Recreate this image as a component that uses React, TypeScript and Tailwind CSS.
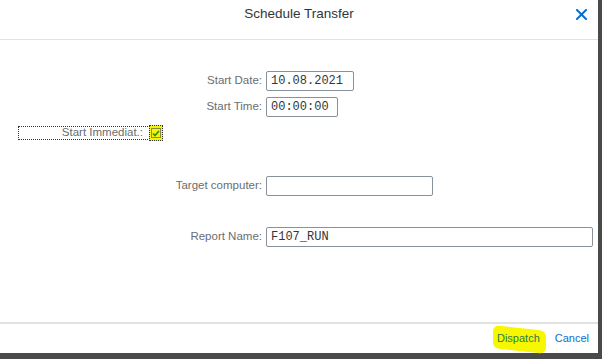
import React from "react";

const labelCls =
  "w-[266px] shrink-0 pr-[4px] text-right text-[11.5px] text-[#6a6d70] leading-none";
const inputCls =
  "h-[20px] border border-[#89919a] rounded-[2px] bg-white flex items-center px-[4px] text-[12px] text-[#32363a] leading-none";

function Row({
  label,
  value,
  width,
  className,
}: {
  label: string;
  value: string;
  width: string;
  className: string;
}) {
  return (
    <div className={"flex items-center " + className}>
      <div className={labelCls} style={{ fontFamily: '"Liberation Sans", Arial, sans-serif' }}>
        {label}
      </div>
      <div
        className={inputCls + " " + width}
        style={{ fontFamily: '"Liberation Mono", "Courier New", monospace' }}
      >
        {value}
      </div>
    </div>
  );
}

export default function App() {
  return (
    <div
      className="w-[602px] h-[359px] bg-[#4a4a4a] flex items-start"
      style={{ fontFamily: '"Liberation Sans", Arial, sans-serif' }}
    >
      <div className="w-[598px] h-[353px] bg-white flex flex-col">
        <div className="relative h-[40px] shrink-0 border-b border-[#e2e2e2] flex items-center justify-center">
          <span className="text-[13.5px] text-[#32363a] -mt-[11px]">Schedule Transfer</span>
          <svg
            className="absolute left-[576px] top-[9px]"
            width="11"
            height="11"
            viewBox="0 0 11 11"
          >
            <path d="M1 1 L10 10 M10 1 L1 10" stroke="#0a6ed1" strokeWidth="2" strokeLinecap="square" />
          </svg>
        </div>

        <div className="flex-1 flex flex-col pt-[31px]">
          <Row label="Start Date:" value="10.08.2021" width="w-[88px]" className="" />
          <Row label="Start Time:" value="00:00:00" width="w-[72px]" className="mt-[6px]" />

          <div className="flex items-center mt-[8px] pl-[18px]">
            <div className="w-[132px] h-[14px] border border-dotted border-[#333] flex items-center justify-end pr-[6px] text-[11.5px] text-[#6a6d70] leading-none">
              Start Immediat.:
            </div>
            <div className="w-[14px] h-[16px] bg-[#f5f500] border border-dotted border-[#333] flex items-center justify-center -ml-[1px]">
              <div className="w-[10px] h-[10px] border border-[#8a8a40] flex items-center justify-center">
                <svg width="8" height="7" viewBox="0 0 8 7">
                  <path d="M1 3.5 L3 5.5 L7 1" fill="none" stroke="#2f8a1e" strokeWidth="1.6" />
                </svg>
              </div>
            </div>
          </div>

          <Row label="Target computer:" value="" width="w-[167px]" className="mt-[35px]" />
          <Row label="Report Name:" value="F107_RUN" width="w-[327px]" className="mt-[31px]" />
        </div>

        <div className="h-[31px] shrink-0 border-t-2 border-[#e2e2e2] flex items-center justify-end pr-[9px] gap-[15px] text-[11px]">
          <span className="relative">
            <span className="absolute -left-[4px] -right-[6px] -top-[2px] -bottom-[4px] bg-[#f7f700] rounded-[6px] skew-y-6"></span>
            <span className="relative text-[#2b7d4f]">Dispatch</span>
          </span>
          <span className="text-[#0a6ed1]">Cancel</span>
        </div>
      </div>
    </div>
  );
}
